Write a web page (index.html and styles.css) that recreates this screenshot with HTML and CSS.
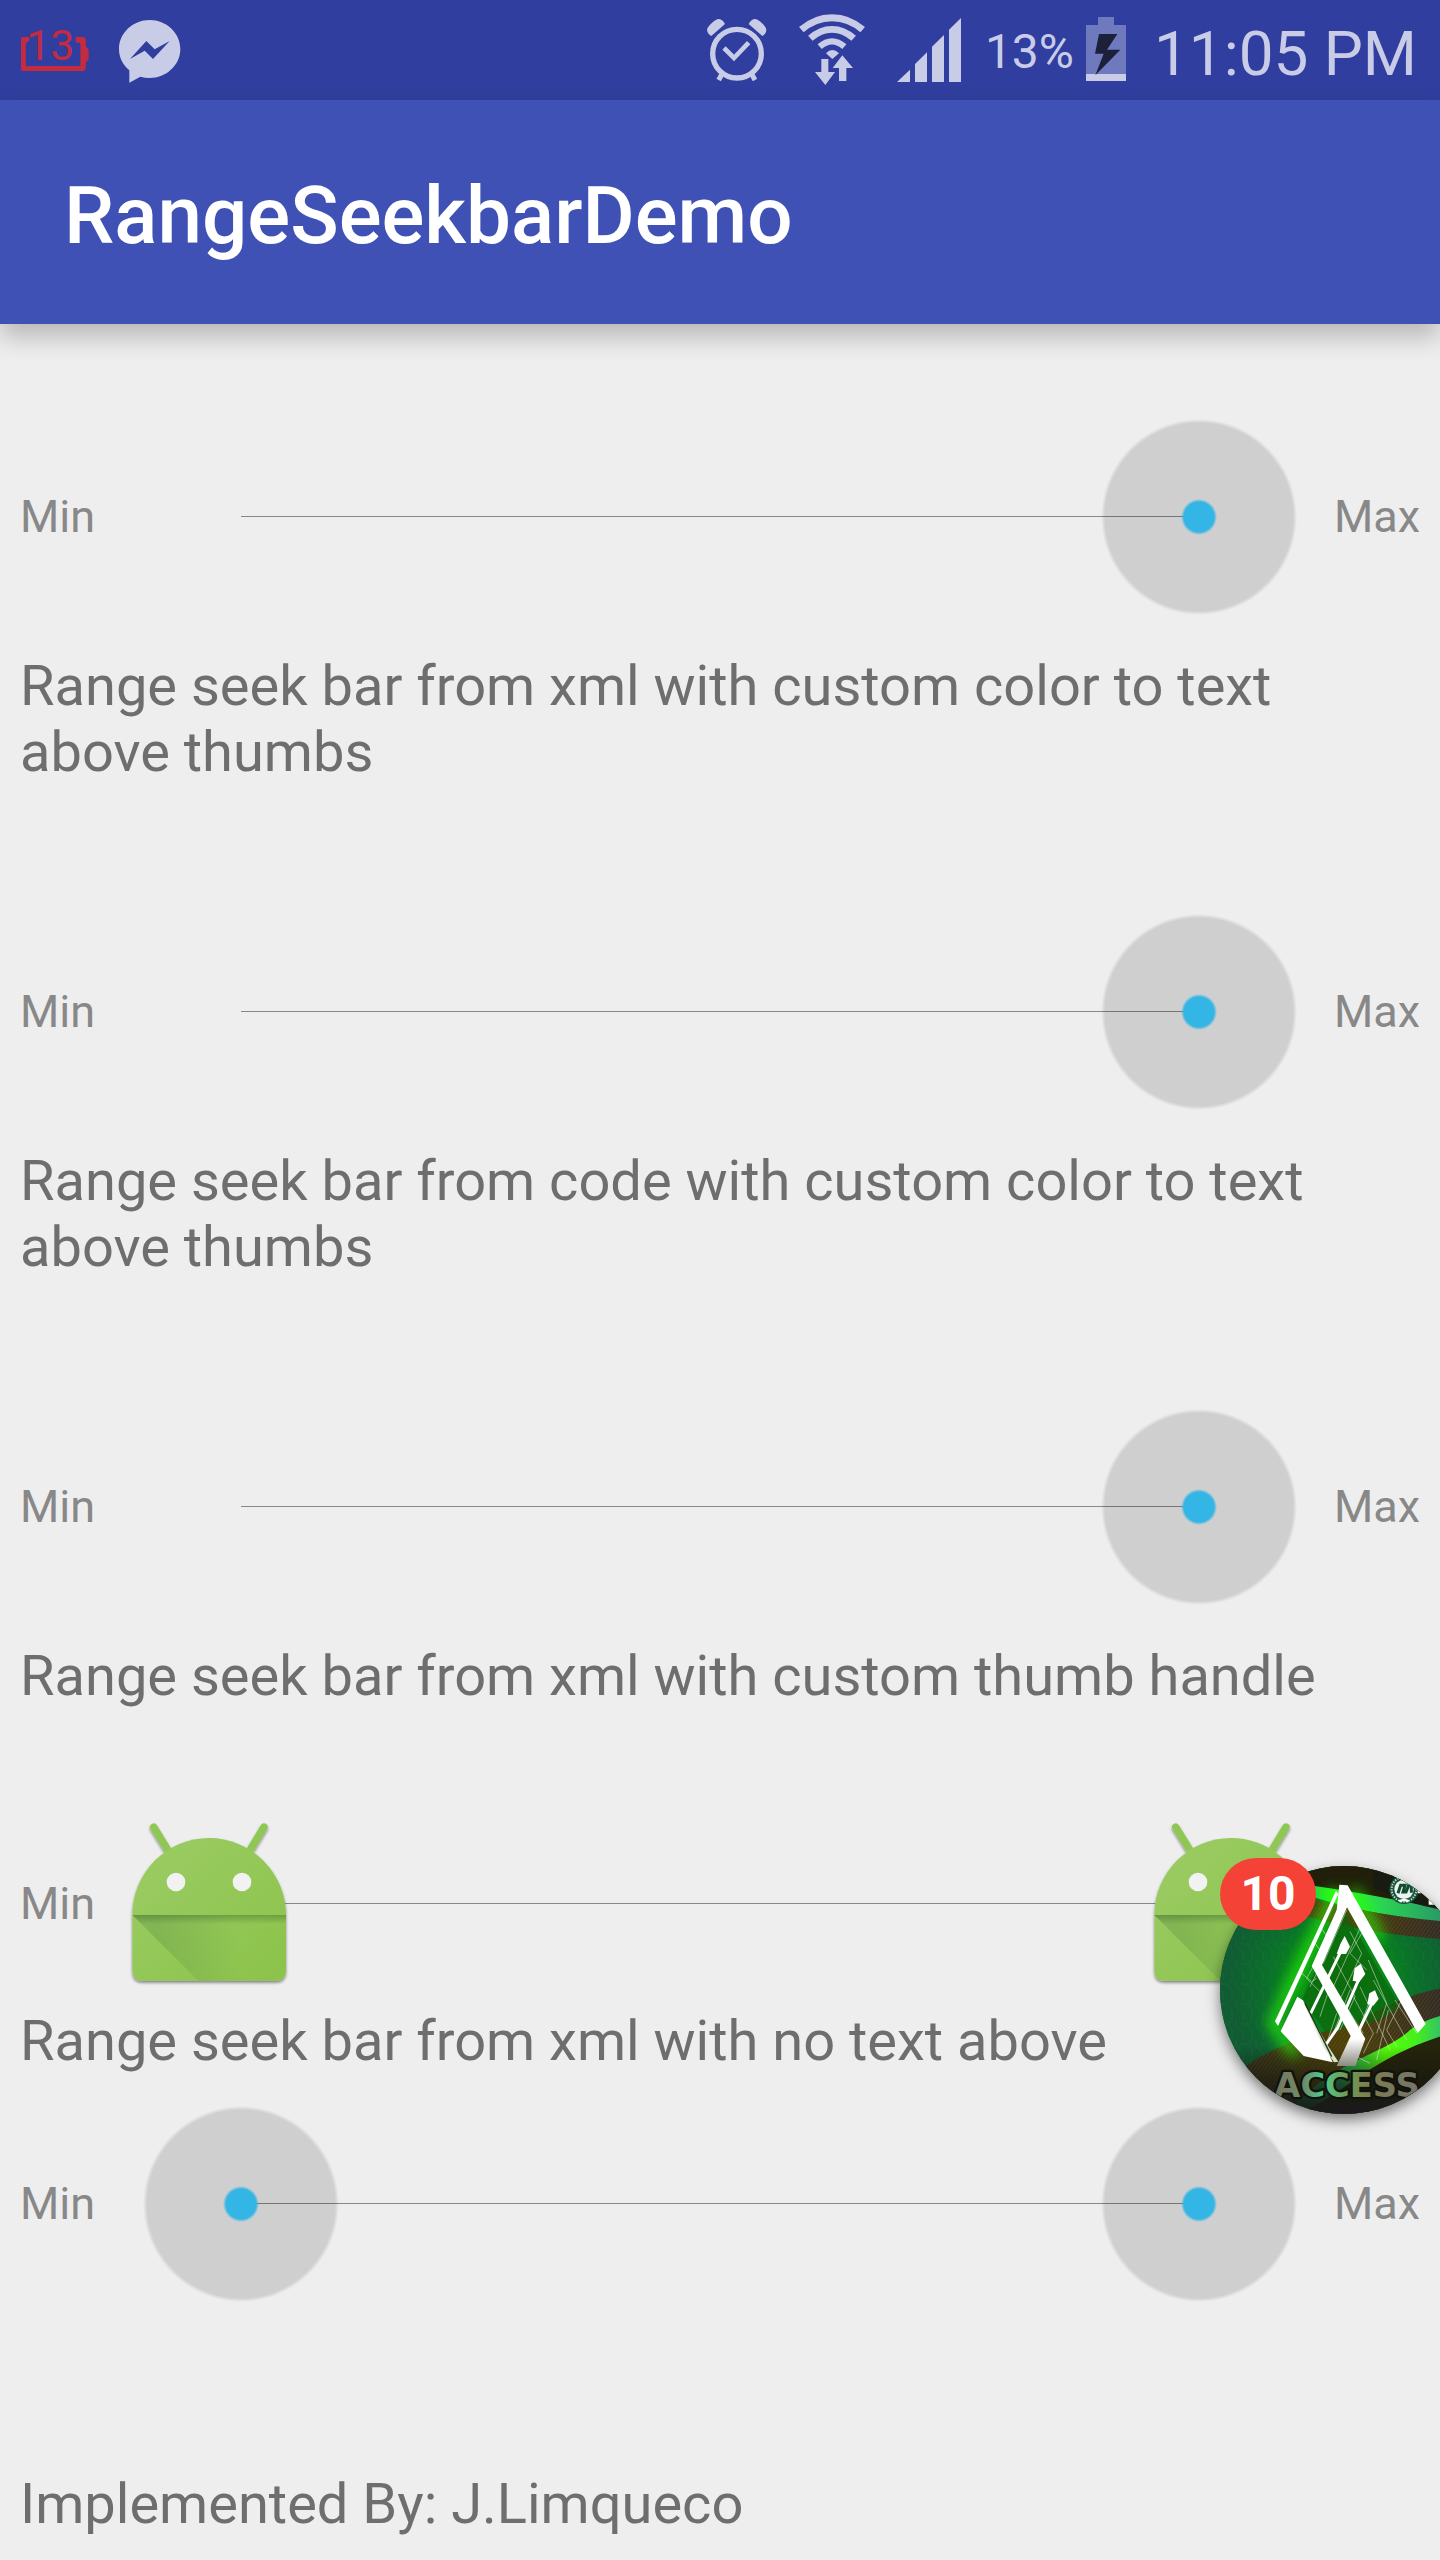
FILE: index.html
```html
<!DOCTYPE html>
<html lang="en">
<head>
  <meta charset="utf-8">
  <meta name="viewport" content="width=device-width, initial-scale=1">
  <title>RangeSeekbarDemo</title>
  <link rel="stylesheet" href="styles.css">
</head>
<body>
  <div class="screen">
    <div class="status-bar">
      <div class="status-group status-left">
        <svg class="icon-charge" viewBox="63 0 205 300" role="img" aria-label="Battery level 13">
          <path d="M83 119H70V206H250V119H233" fill="none" stroke="#c42a40" stroke-width="15" stroke-linejoin="round" stroke-linecap="butt"/>
          <path d="M63 126V120Q63 111 72 111H88V122Q79 124 78 132H63zM228 111H250Q258 111 258 120V140Q267 144 267 150V176Q267 183 258 186V206H243V132Q240 127 228 127z" fill="#c42a40"/>
          <text class="charge-text" x="79" y="180">13</text>
        </svg>
        <svg class="icon-messenger" viewBox="359 0 186 300" role="img" aria-label="Messenger">
          <path d="M451 60C500 60 543 98 543 147S500 234 451 234Q436 234 423 230L390 248V211C371 195 359 173 359 147C359 98 402 60 451 60zM392 177L436 152L461 177L511 123L466 148L441 123z" fill="#c9cce7" fill-rule="evenodd"/>
        </svg>
      </div>
      <div class="status-group status-right">
        <svg class="icon-alarm" viewBox="72 0 180 300" role="img" aria-label="Alarm">
          <g fill="none" stroke="#c9cce7">
            <circle cx="162" cy="161" r="73" stroke-width="16"/>
            <path d="M123 144L153 174L197 128" stroke-width="14"/>
            <path d="M117 222L107 240M206 222L216 240" stroke-width="15"/>
          </g>
          <path d="M85 108L126 72Q118 57 106 57Q98 58 81 74Q72 83 72 91Q75 104 85 108zM238 108L197 72Q205 57 217 57Q225 58 242 74Q250 83 250 91Q248 104 238 108z" fill="#c9cce7"/>
        </svg>
        <svg class="icon-wifi" viewBox="360 0 198 300" role="img" aria-label="Wi-Fi">
          <g fill="none" stroke="#c9cce7">
            <path d="M367 89Q408 53 459 53T551 89" stroke-width="21"/>
            <path d="M394 115Q424 88 459 88T524 115" stroke-width="20"/>
            <path d="M422 140Q440 124 459 124T496 140" stroke-width="19"/>
          </g>
          <path d="M441 160Q450 150 460 150T480 160L460 177zM427 177H448V216H468L439 255L408 216H427zM490 166L522 204H502V243H480V204H461z" fill="#c9cce7"/>
        </svg>
        <svg class="icon-signal" viewBox="651 0 192 300" role="img" aria-label="Signal strength">
          <path d="M651 246L690 209V246zM705 246V192L741 157V246zM756 246V140L792 105V246zM807 246V89L843 54V246z" fill="#c9cce7"/>
        </svg>
        <span class="battery-level">13%</span>
        <svg class="icon-battery" viewBox="1218 0 120 300" role="img" aria-label="Charging">
          <path d="M1254 51H1302V75H1338V222H1218V75H1254z" fill="#6f79bd"/>
          <path d="M1218 222H1338V243H1218z" fill="#c9cce7"/>
          <path d="M1257 102H1312L1281 149H1321L1246 226L1271 161H1245z" fill="#1c203a"/>
        </svg>
        <time class="clock" datetime="23:05">11:05 PM</time>
      </div>
    </div>

    <header class="app-bar">
      <h1 class="app-title">RangeSeekbarDemo</h1>
    </header>

    <main class="content">
      <div class="seek-row">
        <span class="seek-label">Min</span>
        <div class="seek">
          <input class="seek-input" id="bar1-max" type="range" min="0" max="100" value="100">
        </div>
        <label class="seek-label seek-label-max" for="bar1-max">Max</label>
      </div>

      <p class="caption">Range seek bar from xml with custom color to text above thumbs</p>
      <div class="seek-row seek-row-values">
        <span class="seek-label">Min</span>
        <div class="seek">
          <input class="seek-input" id="bar2-max" type="range" min="0" max="100" value="100">
        </div>
        <label class="seek-label seek-label-max" for="bar2-max">Max</label>
      </div>

      <p class="caption">Range seek bar from code with custom color to text above thumbs</p>
      <div class="seek-row seek-row-values">
        <span class="seek-label">Min</span>
        <div class="seek">
          <input class="seek-input" id="bar3-max" type="range" min="0" max="100" value="100">
        </div>
        <label class="seek-label seek-label-max" for="bar3-max">Max</label>
      </div>

      <p class="caption">Range seek bar from xml with custom thumb handle</p>
      <div class="seek-row seek-row-values">
        <label class="seek-label" for="bar4-min">Min</label>
        <div class="seek seek-android">
          <input class="seek-input" id="bar4-min" type="range" min="0" max="100" value="0">
          <input class="seek-input" id="bar4-max" type="range" min="0" max="100" value="100" aria-label="Maximum">
        </div>
      </div>

      <p class="caption">Range seek bar from xml with no text above</p>
      <div class="seek-row">
        <label class="seek-label" for="bar5-min">Min</label>
        <div class="seek">
          <input class="seek-input" id="bar5-min" type="range" min="0" max="100" value="0">
          <input class="seek-input" id="bar5-max" type="range" min="0" max="100" value="100">
        </div>
        <label class="seek-label seek-label-max" for="bar5-max">Max</label>
      </div>

      <p class="caption credit">Implemented By: J.Limqueco</p>
    </main>

    <button class="chat-head" type="button" aria-label="Open chat, 10 unread messages">
      <svg class="chat-picture" viewBox="300 198 744 744" aria-hidden="true">
        <defs>
          <clipPath id="round"><circle cx="672" cy="570" r="372"/></clipPath>
          <radialGradient id="field" gradientUnits="userSpaceOnUse" cx="665" cy="540" r="340">
            <stop offset="0" stop-color="#12780c"/>
            <stop offset=".35" stop-color="#078a16"/>
            <stop offset=".65" stop-color="#0b702b"/>
            <stop offset="1" stop-color="#115c33"/>
          </radialGradient>
          <linearGradient id="topbeam" gradientUnits="userSpaceOnUse" x1="540" y1="0" x2="980" y2="0">
            <stop offset="0" stop-color="#1fc04a"/>
            <stop offset=".25" stop-color="#2bff1c"/>
            <stop offset=".5" stop-color="#2bdc50"/>
            <stop offset="1" stop-color="#2a9468"/>
          </linearGradient>
          <linearGradient id="lowbeam" gradientUnits="userSpaceOnUse" x1="520" y1="0" x2="980" y2="0">
            <stop offset="0" stop-color="#127a40"/>
            <stop offset=".3" stop-color="#20a860"/>
            <stop offset=".6" stop-color="#55ff08"/>
            <stop offset=".8" stop-color="#45f01c"/>
            <stop offset="1" stop-color="#2fb878"/>
          </linearGradient>
          <linearGradient id="band" gradientUnits="userSpaceOnUse" x1="380" y1="0" x2="980" y2="0">
            <stop offset="0" stop-color="#33301c"/>
            <stop offset=".5" stop-color="#4d4006"/>
            <stop offset="1" stop-color="#30292a"/>
          </linearGradient>
          <linearGradient id="lettering" gradientUnits="userSpaceOnUse" x1="465" y1="0" x2="905" y2="0">
            <stop offset="0" stop-color="#77755f"/>
            <stop offset=".2" stop-color="#6f8c6a"/>
            <stop offset=".32" stop-color="#4fc98a"/>
            <stop offset=".5" stop-color="#6f9a52"/>
            <stop offset=".65" stop-color="#7d7c50"/>
            <stop offset="1" stop-color="#75746c"/>
          </linearGradient>
          <linearGradient id="fold" x1="0" y1="0" x2="0" y2="1">
            <stop offset=".85" stop-color="#fff"/>
            <stop offset="1" stop-color="#8b8a80"/>
          </linearGradient>
          <linearGradient id="floor" x1="0" y1="0" x2="0" y2="1">
            <stop offset="0" stop-color="#15150f" stop-opacity="0"/>
            <stop offset=".5" stop-color="#15150f" stop-opacity=".6"/>
            <stop offset="1" stop-color="#1a1a1c"/>
          </linearGradient>
          <pattern id="hatch" width="9" height="9" patternUnits="userSpaceOnUse" patternTransform="rotate(35)">
            <path d="M0 0V9" stroke="#8a6f30" stroke-width="3" opacity=".45"/>
          </pattern>
          <pattern id="circuit" width="60" height="60" patternUnits="userSpaceOnUse">
            <path d="M0 12H22L36 26V60M10 60V40L0 30M48 0V18L60 30M30 0V8" fill="none" stroke="#2a8a4c" stroke-width="2" opacity=".3"/>
          </pattern>
          <filter id="glow" x="-30%" y="-30%" width="160%" height="160%"><feGaussianBlur stdDeviation="20"/></filter>
        </defs>
        <g clip-path="url(#round)">
          <path d="M300 198H1044V942H300z" fill="url(#field)"/>
          <path d="M300 198H1044V942H300z" fill="url(#circuit)"/>
          <path d="M300 198H1044V370Q800 320 540 248z" fill="#211f0a"/>
          <path d="M560 255Q740 278 1044 345V378Q760 350 560 285z" fill="url(#topbeam)"/>
          <path d="M760 198H1044V340Q900 330 760 262z" fill="#151914" opacity=".7"/>
          <path d="M480 270Q740 350 1044 370V422Q740 410 480 325z" fill="url(#band)"/>
          <path d="M480 270Q740 350 1044 370V422Q740 410 480 325z" fill="url(#hatch)"/>
          <path d="M350 820C500 700 650 700 760 640S930 570 1044 550V942H350z" fill="url(#band)"/>
          <path d="M350 820C500 700 650 700 760 640S930 570 1044 550V942H350z" fill="url(#hatch)"/>
          <path d="M500 942C620 790 800 760 870 690Q920 650 1044 630V700Q850 740 730 830T540 942z" fill="url(#lowbeam)"/>
          <path d="M540 942C720 850 760 760 1044 685V942z" fill="#25240c"/>
          <path d="M650 270L460 670L530 770M700 270L780 420" fill="none" stroke="#25ff05" stroke-width="34" opacity=".75" filter="url(#glow)"/>
          <path d="M672 330L545 600L620 700L780 660L840 620z" fill="#0d650d" opacity=".7"/>
          <path d="M300 740H1044V942H300z" fill="url(#floor)"/>
          <g fill="none" stroke="#e9f5e4" stroke-width="2" opacity=".75">
            <path d="M604 385L625 415L560 535L605 580M585 430L615 470L570 560M690 395L725 460L650 620L700 690M720 385L640 560L730 700M725 400L690 460L740 510M680 330L610 490M640 470L705 590L660 690M700 590L760 700L730 760M720 560L810 750M745 480L800 610L770 700M690 570L640 700M760 540L860 720M805 630L770 780M850 590L800 690L830 740M825 600L890 700M650 640L620 730M750 600L690 760L750 790M545 520L575 545L590 535M630 560L600 650"/>
          </g>
          <g fill="none" stroke="#fff" stroke-width="9">
            <path d="M572 640L667 445M650 690L720 530M715 695L763 595M617 735L655 680"/>
          </g>
          <path d="M661 432L674 408L690 440L678 462L650 462zM704 505L722 491L736 522L718 546L698 542zM748 580L765 571L776 597L760 617L742 612z" fill="#fff"/>
          <path d="M648 272L655 282L474 678L465 664z" fill="#fff"/>
          <path d="M658 254L683 256L917 672L893 699L681 322L606 495L736 716L706 798H650L692 708L575 498L650 330z" fill="url(#fold)"/>
          <path d="M532 590L549 601L614 736L638 787L551 768L482 694z" fill="#fff"/>
          <path d="M549 603L622 735L655 785L642 787L610 740z" fill="#d9e2cf"/>
          <path d="M555 610L635 770" stroke="#17380c" stroke-width="4"/>
          <text class="chat-lettering" x="463" y="890" fill="url(#lettering)">ACCESS</text>
          <circle cx="852" cy="268" r="44" fill="#16553a"/>
          <circle cx="852" cy="268" r="37" fill="none" stroke="#c6d8cc" stroke-width="6" stroke-dasharray="4 4"/>
          <circle cx="852" cy="268" r="29" fill="#eef3ee"/>
          <path d="M834 280L842 256H855L849 276H858L866 256H874V278" fill="none" stroke="#124a32" stroke-width="9"/>
          <path d="M838 304Q852 296 866 304" fill="none" stroke="#fff" stroke-width="8"/>
          <path d="M893 262L906 280H893zM926 296H950V314H926z" fill="#fff"/>
        </g>
      </svg>
      <span class="chat-badge">10</span>
    </button>
  </div>
</body>
</html>
```

FILE: styles.css
```css
* {
  box-sizing: border-box;
}

body {
  margin: 0;
  background: #eeeeee;
  font-family: Roboto, "Noto Sans", sans-serif;
}

.screen {
  position: relative;
  min-height: 100vh;
  overflow: hidden;
}

/* Status bar */
.status-bar {
  display: flex;
  justify-content: space-between;
  height: 100px;
  padding: 0 23px 0 21px;
  background: #303f9f;
  color: #c9cce7;
  white-space: nowrap;
}

.status-group {
  display: flex;
  align-items: center;
}

.status-left {
  gap: 30px;
}

.status-right {
  gap: 32px;
}

.status-group svg {
  flex: none;
  height: 100px;
}

.icon-charge {
  width: 68px;
}

.icon-messenger {
  width: 62px;
}

.icon-alarm {
  width: 60px;
}

.icon-wifi {
  width: 66px;
}

.icon-signal {
  width: 64px;
}

.icon-battery {
  width: 40px;
  margin-left: -20px;
}

.charge-text {
  font-size: 129px;
  fill: #c42a40;
}

.battery-level {
  margin-left: -8px;
  padding-top: 4px;
  font-size: 48px;
  line-height: 56px;
}

.clock {
  margin-left: -4px;
  padding-top: 8px;
  font-size: 62px;
  line-height: 72px;
}

/* App bar */
.app-bar {
  position: relative;
  display: flex;
  align-items: center;
  height: 224px;
  padding: 8px 64px 0;
  background: #3f51b5;
  box-shadow: 0 12px 24px rgba(0, 0, 0, 0.24);
}

.app-title {
  margin: 0;
  color: #ffffff;
  font-size: 80px;
  font-weight: 500;
  line-height: 96px;
}

/* Seek bars */
.content {
  padding: 63px 20px 22px;
}

.caption {
  margin: 0;
  color: #6e6e6e;
  font-size: 56px;
  line-height: 66px;
}

.credit {
  padding-top: 131px;
}

.seek-row {
  display: grid;
  grid-template-columns: 93px 1fr 93px;
  align-items: center;
  padding: 1px 0 9px;
}

.seek-row-values {
  padding-top: 98px;
}

.seek-label {
  padding-top: 2px;
  color: #888888;
  font-size: 45px;
  line-height: 52px;
}

.seek-label-max {
  text-align: right;
}

.seek {
  --thumb: 256px;
  --thumb-image: radial-gradient(circle at 128px 129px, #33b5e5 15px, rgba(51, 181, 229, 0) 18px),
    radial-gradient(circle at 128px 129px, rgba(0, 0, 0, 0.13) 94px, rgba(0, 0, 0, 0) 98px);
  display: grid;
  align-items: center;
}

.seek::before {
  content: "";
  grid-area: 1 / 1;
  height: 1px;
  margin: 0 calc(var(--thumb) / 2);
  background: #888888;
}

.seek-android {
  --thumb: 192px;
  --thumb-image: url("data:image/svg+xml,%3Csvg xmlns='http://www.w3.org/2000/svg' viewBox='339 21 576 576'%3E%3Cdefs%3E%3ClinearGradient id='a' x1='0' y1='0' x2='1' y2='1'%3E%3Cstop offset='0' stop-color='%239ccc65'/%3E%3Cstop offset='1' stop-color='%238bc34a'/%3E%3C/linearGradient%3E%3ClinearGradient id='b' gradientUnits='userSpaceOnUse' x1='470' y1='420' x2='710' y2='400'%3E%3Cstop offset='0' stop-color='%23336633' stop-opacity='.2'/%3E%3Cstop offset='1' stop-color='%23336633' stop-opacity='0'/%3E%3C/linearGradient%3E%3ClinearGradient id='c' x1='0' y1='0' x2='0' y2='1'%3E%3Cstop offset='0' stop-color='%23335522' stop-opacity='.35'/%3E%3Cstop offset='1' stop-color='%23335522' stop-opacity='0'/%3E%3C/linearGradient%3E%3Cfilter id='s' x='-10%25' y='-10%25' width='120%25' height='125%25'%3E%3CfeDropShadow dx='0' dy='6' stdDeviation='5' flood-opacity='.45'/%3E%3C/filter%3E%3C/defs%3E%3Cg filter='url(%23s)'%3E%3Cpath d='M461 81L510 160M792 81L744 160' stroke='%238fc755' stroke-width='22' stroke-linecap='round'/%3E%3Cpath d='M397 345C397 218 500 114 627 114S858 218 858 345V512Q858 542 828 542H427Q397 542 397 512z' fill='url(%23a)'/%3E%3C/g%3E%3Cpath d='M397 345H858V542H595z' fill='url(%23b)'/%3E%3Cpath d='M397 345H858V372H424z' fill='url(%23c)'/%3E%3Ccircle cx='528' cy='246' r='28' fill='%23f2f2f2'/%3E%3Ccircle cx='726' cy='246' r='28' fill='%23f2f2f2'/%3E%3C/svg%3E");
}

.seek-input {
  grid-area: 1 / 1;
  width: 100%;
  height: var(--thumb);
  margin: 0;
  appearance: none;
  background: transparent;
  pointer-events: none;
}

.seek-input::-webkit-slider-runnable-track {
  height: var(--thumb);
  background: transparent;
}

.seek-input::-webkit-slider-thumb {
  appearance: none;
  width: var(--thumb);
  height: var(--thumb);
  background: var(--thumb-image);
  pointer-events: auto;
}

.seek-input::-moz-range-thumb {
  width: var(--thumb);
  height: var(--thumb);
  border: 0;
  background: var(--thumb-image);
  pointer-events: auto;
}

/* Chat head floating over the app, partly past the screen edge */
.chat-head {
  position: absolute;
  top: 1866px;
  right: -28px;
  width: 248px;
  height: 248px;
  padding: 0;
  border: 0;
  border-radius: 50%;
  background: #115c33;
  box-shadow: 0 6px 14px rgba(0, 0, 0, 0.5);
  font-family: inherit;
}

.chat-picture {
  display: block;
  width: 100%;
  height: 100%;
}

.chat-lettering {
  font-family: "DejaVu Sans", sans-serif;
  font-size: 101px;
  font-weight: 700;
  stroke: #10120c;
  stroke-width: 14px;
  stroke-linejoin: round;
  paint-order: stroke;
}

.chat-badge {
  position: absolute;
  top: -8px;
  left: 0;
  width: 96px;
  height: 72px;
  border-radius: 36px;
  background: #f44336;
  color: #ffffff;
  font-size: 48px;
  font-weight: 700;
  line-height: 72px;
  text-align: center;
}
```
